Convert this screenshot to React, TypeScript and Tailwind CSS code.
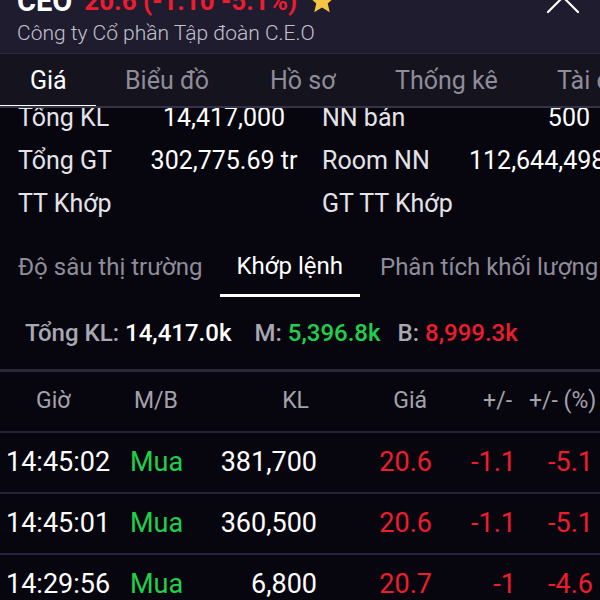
import React from "react";

const font = { fontFamily: "Roboto, 'Noto Sans', sans-serif" };

const mainTabs = [
  { label: "Giá", w: "w-[125px] pl-[30px]", active: true },
  { label: "Biểu đồ", w: "w-[145px]" },
  { label: "Hồ sơ", w: "w-[125px]" },
  { label: "Thống kê", w: "w-[162px]" },
  { label: "Tài chính", w: "w-[120px]" },
];

const trades = [
  { time: "14:45:02", side: "Mua", vol: "381,700", price: "20.6", chg: "-1.1", pct: "-5.1" },
  { time: "14:45:01", side: "Mua", vol: "360,500", price: "20.6", chg: "-1.1", pct: "-5.1" },
  { time: "14:29:56", side: "Mua", vol: "6,800", price: "20.7", chg: "-1", pct: "-4.6" },
];

const Star = () => (
  <svg width="30" height="30" viewBox="0 0 24 24" className="shrink-0">
    <path
      d="M12 2l2.9 6.6 7.1.6-5.4 4.7 1.6 7-6.2-3.7-6.2 3.7 1.6-7L2 9.2l7.1-.6z"
      fill="#f6c343"
    />
  </svg>
);

const App = () => {
  return (
    <div className="w-[600px] h-[600px] overflow-hidden bg-[#07060f] text-white" style={font}>
      {/* header */}
      <div className="h-[54px] bg-[#1f1c30] border-b border-[#2e2b40] overflow-hidden">
        <div className="flex items-center justify-between h-[34px] -mt-[16px] pl-[17px] pr-[20px]">
          <div className="flex items-center text-[27px] font-bold leading-none">
            <span className="text-[29px]">CEO</span>
            <span className="ml-[12px] text-[#ee1c2e] text-[26px]">20.6 (-1.10 -5.1%)</span>
            <span className="ml-[10px]">
              <Star />
            </span>
          </div>
          <svg width="34" height="34" viewBox="0 0 34 34" className="-mt-[9px]">
            <path d="M2 2l30 30M32 2L2 32" stroke="#ffffff" strokeWidth="2.2" strokeLinecap="round" />
          </svg>
        </div>
        <div className="pl-[17px] mt-[2px] text-[21px] leading-[26px] font-light text-[#c3c2cc]">
          Công ty Cổ phần Tập đoàn C.E.O
        </div>
      </div>

      {/* main tabs */}
      <div className="relative h-[54px] bg-[#15131e] border-b-2 border-[#35334a] flex items-center whitespace-nowrap overflow-hidden">
        {mainTabs.map((t) => (
          <div
            key={t.label}
            className={`${t.w} shrink-0 text-[25px] pt-[1px] ${t.active ? "text-white" : "text-[#8f8d9a]"}`}
          >
            {t.label}
          </div>
        ))}
        <div className="absolute left-0 -bottom-[2px] w-[96px] h-[3px] bg-white" />
      </div>

      {/* info rows */}
      <div className="h-[116px] overflow-hidden text-[25px]">
        <div className="-mt-[12px]">
          <div className="flex items-center h-[43px] whitespace-nowrap">
            <div className="w-[148px] shrink-0 pl-[18px] text-[#e4e3ea]">Tổng KL</div>
            <div className="w-[152px] shrink-0 text-center">14,417,000</div>
            <div className="w-[147px] shrink-0 pl-[22px] text-[#e4e3ea]">NN bán</div>
            <div className="flex-1 text-right pr-[10px]">500</div>
          </div>
          <div className="flex items-center h-[43px] whitespace-nowrap">
            <div className="w-[148px] shrink-0 pl-[18px] text-[#e4e3ea]">Tổng GT</div>
            <div className="w-[152px] shrink-0 text-center">302,775.69 tr</div>
            <div className="w-[147px] shrink-0 pl-[22px] text-[#e4e3ea]">Room NN</div>
            <div className="shrink-0 pl-[22px]">112,644,498</div>
          </div>
          <div className="flex items-center h-[43px] whitespace-nowrap">
            <div className="w-[300px] shrink-0 pl-[18px] text-[#e4e3ea]">TT Khớp</div>
            <div className="pl-[22px] text-[#e4e3ea]">GT TT Khớp</div>
          </div>
        </div>
      </div>

      {/* sub tabs */}
      <div className="flex h-[73px] whitespace-nowrap text-[24px]">
        <div className="pl-[18px] pr-[17px] pt-[13px] flex items-center text-[#8f8d9a]">Độ sâu thị trường</div>
        <div className="px-[17px] pt-[13px] flex items-center border-b-[3px] border-white text-white">Khớp lệnh</div>
        <div className="pl-[20px] pt-[13px] flex items-center text-[#8f8d9a]">Phân tích khối lượng</div>
      </div>

      {/* summary */}
      <div className="flex items-center h-[75px] pl-[25px] text-[24px] font-medium whitespace-nowrap border-b-[3px] border-[#2a2838]">
        <span className="text-[#a9a8b2]">Tổng KL:</span>
        <span className="ml-[6px] text-white">14,417.0k</span>
        <span className="ml-[23px] text-[#a9a8b2]">M:</span>
        <span className="ml-[6px] text-[#1fd14a]">5,396.8k</span>
        <span className="ml-[17px] text-[#a9a8b2]">B:</span>
        <span className="ml-[6px] text-[#ee1c2e]">8,999.3k</span>
      </div>

      {/* table header */}
      <div className="grid grid-cols-[134px_56px_119px_118px_85px_88px] h-[61px] items-center text-[23px] text-[#a3a2ad] border-b-2 border-[#25233a] whitespace-nowrap overflow-hidden">
        <div className="pl-[36px]">Giờ</div>
        <div>M/B</div>
        <div className="text-right">KL</div>
        <div className="text-right">Giá</div>
        <div className="text-right">+/-</div>
        <div className="pl-[17px]">+/- (%)</div>
      </div>

      {/* trades */}
      {trades.map((r) => (
        <div
          key={r.time}
          className="grid grid-cols-[130px_60px_127px_115px_84px_84px] h-[61px] items-center text-[27px] border-b-2 border-[#25233a] whitespace-nowrap"
        >
          <div className="pl-[6px] text-white">{r.time}</div>
          <div className="text-[#1fd14a]">{r.side}</div>
          <div className="text-right text-white">{r.vol}</div>
          <div className="text-right text-[#ee1c2e]">{r.price}</div>
          <div className="text-right text-[#ee1c2e]">{r.chg}</div>
          <div className="text-right pr-[7px] text-[#ee1c2e]">{r.pct}</div>
        </div>
      ))}
    </div>
  );
};

export default App;
